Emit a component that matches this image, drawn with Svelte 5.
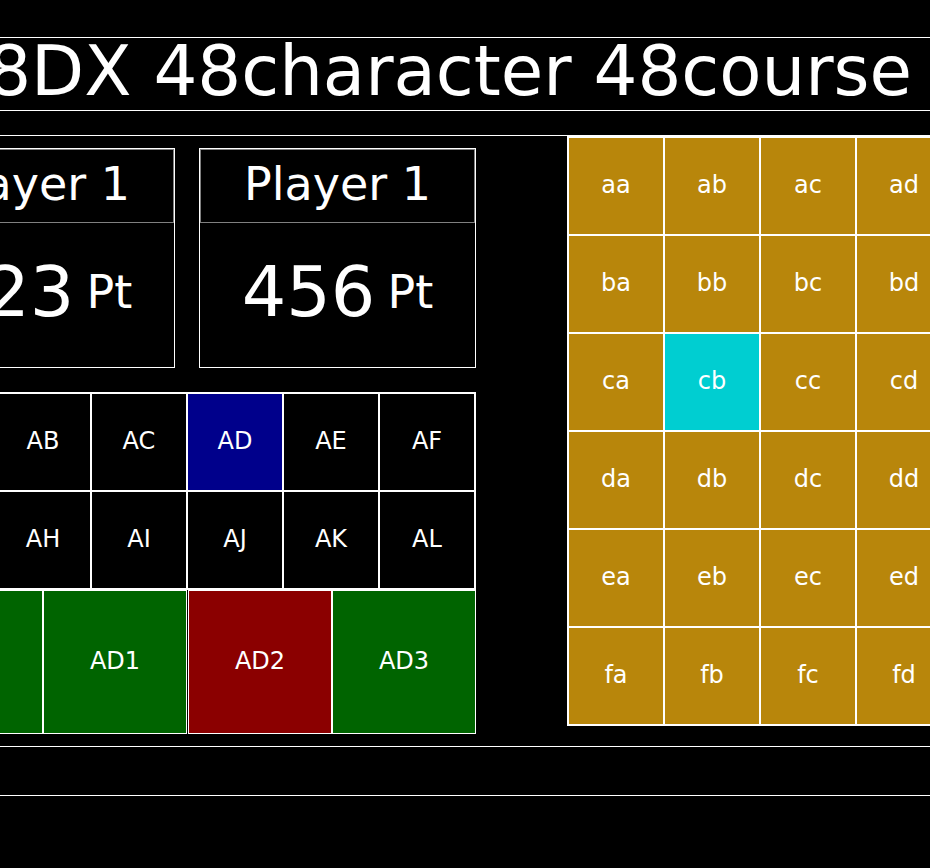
<script>
  const players = [
    { name: 'Player 1', points: 123 },
    { name: 'Player 1', points: 456 },
  ];
  const characters = [...'ABCDEFGHIJKL'].map((c) => 'A' + c);
  const variants = [['AD0', 'AD1'], ['AD2', 'AD3']];
  const courses = [...'abcdef'].flatMap((row) => [...'abcd'].map((col) => row + col));

  let character = $state('AD');
  let variant = $state('AD2');
  let course = $state('cb');
</script>

<div class="page">
  <header>
    <h1>8DX 48character 48course</h1>
  </header>

  <main>
    <section class="left">
      <div class="players">
        {#each players as player}
          <article class="player">
            <h2>{player.name}</h2>
            <p class="score"><span class="points">{player.points}</span><span class="unit">Pt</span></p>
          </article>
        {/each}
      </div>

      <div class="characters">
        {#each characters as name}
          <button class:active={character === name} onclick={() => (character = name)}>{name}</button>
        {/each}
      </div>

      <div class="variants">
        {#each variants as pair}
          <div class="pair">
            {#each pair as name}
              <button class:active={variant === name} onclick={() => (variant = name)}>{name}</button>
            {/each}
          </div>
        {/each}
      </div>
    </section>

    <section class="courses">
      {#each courses as name}
        <button class:active={course === name} onclick={() => (course = name)}>{name}</button>
      {/each}
    </section>
  </main>

  <footer></footer>
</div>

<style>
  :global(body) {
    background: #000;
  }

  .page {
    box-sizing: border-box;
    min-height: 100vh;
    padding-top: 37px;
    overflow: hidden;
    background: #000;
    color: #fff;
    font-family: 'DejaVu Sans', Verdana, sans-serif;
    font-size: 24px;
  }

  header {
    display: flex;
    justify-content: flex-end;
    margin-bottom: 24px;
    padding: 0 18px 6px;
    border: solid #fff;
    border-width: 1px 0;
  }

  h1,
  h2,
  p {
    margin: 0;
    font-weight: 400;
    white-space: nowrap;
  }

  h1 {
    font-size: 69px;
    line-height: 66px;
  }

  main {
    display: flex;
    align-items: flex-start;
    gap: 91px;
    border: solid #fff;
    border-width: 1px 0;
  }

  .left {
    flex: none;
    width: 578px;
    margin-left: -102px;
    padding: 12px 0;
  }

  .players {
    display: flex;
    gap: 24px;
    margin-bottom: 24px;
  }

  .player {
    flex: 1;
    border: 1px solid #fff;
  }

  h2 {
    padding-bottom: 4px;
    border: 1px solid #808080;
    font-size: 46px;
    line-height: 68px;
    text-align: center;
  }

  .score {
    display: flex;
    align-items: center;
    justify-content: center;
    gap: 12px;
    padding-bottom: 6px;
    line-height: 138px;
  }

  .points {
    font-size: 70px;
  }

  .unit {
    font-size: 46px;
  }

  button {
    box-sizing: border-box;
    margin: 0;
    padding: 0 0 2px;
    border: 1px solid #fff;
    border-radius: 0;
    background: #000;
    color: inherit;
    font: inherit;
    cursor: pointer;
  }

  .characters,
  .courses {
    display: grid;
    flex: none;
    grid-auto-rows: 98px;
    border: 1px solid #fff;
  }

  .characters {
    grid-template-columns: repeat(6, 96px);
  }

  .characters .active {
    background: #00008b;
  }

  .courses {
    grid-template-columns: repeat(4, 96px);
  }

  .courses button {
    background: #b8860b;
  }

  .courses .active {
    background: #00ced1;
  }

  .variants {
    display: flex;
  }

  .pair {
    display: flex;
    flex: 1;
    justify-content: flex-end;
  }

  .pair button {
    width: 144px;
    height: 144px;
    background: #006400;
  }

  .pair .active {
    background: #8b0000;
  }

  footer {
    height: 48px;
    border-bottom: 1px solid #fff;
  }
</style>
